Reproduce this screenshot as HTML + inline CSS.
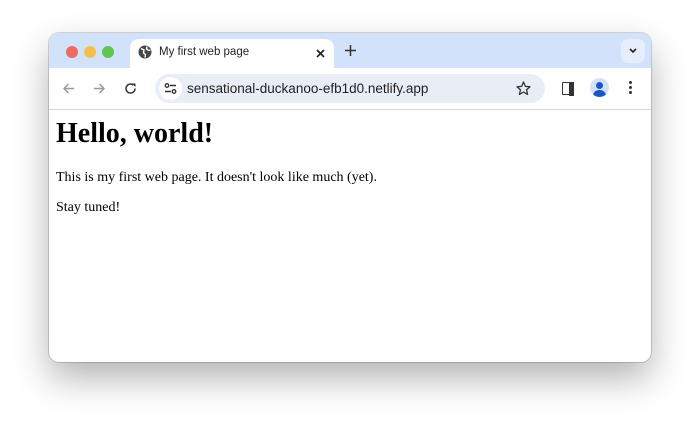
<!DOCTYPE html>
<html><head><style>
body{margin:0;width:700px;height:428px;background:#fff;position:relative;overflow:hidden;font-family:"Liberation Sans",sans-serif}
.win{position:absolute;left:49px;top:33px;width:602px;height:329px;border-radius:10px;background:#fff;box-shadow:0 16px 36px rgba(0,0,0,.3),0 0 0 1px rgba(0,0,0,.15);overflow:hidden}
.strip{position:absolute;left:0;top:0;width:602px;height:35px;background:#d3e2fb}
.dot{position:absolute;top:13px;width:12px;height:12px;border-radius:50%}
.tab{position:absolute;left:81px;top:6px;width:204px;height:29px;background:#fff;border-radius:9px 9px 0 0}
.tab span{position:absolute;left:29px;top:7px;font-size:11.5px;color:#1f1f1f}
.bar{position:absolute;left:0;top:35px;width:602px;height:41px;background:#fff;border-bottom:1px solid #d8d8d8}
.omni{position:absolute;left:106px;top:6px;width:390px;height:29px;border-radius:15px;background:#e9eef6}
.omni span{position:absolute;left:32px;top:7px;font-size:13.5px;color:#1f1f1f}
.content{position:absolute;left:0;top:77px;font-family:"Liberation Serif",serif;color:#000}
h1{position:absolute;left:7px;top:8px;margin:0;font-size:28px;white-space:nowrap}
p{position:absolute;left:7px;margin:0;font-size:14px;white-space:nowrap}
</style></head><body>
<div class="win">
<div class="strip">
<div class="dot" style="left:17px;background:#ec6a5f"></div>
<div class="dot" style="left:35px;background:#f4bf4f"></div>
<div class="dot" style="left:53px;background:#61c554"></div>
<div class="tab">
<svg style="position:absolute;left:8px;top:6px" width="14" height="14" viewBox="0 0 14 14"><circle cx="7" cy="7" r="6.5" fill="#474747"/><path d="M3 3.5 L6 5 L5.5 8 L7.5 9.5 L7 12.5 M9 1.5 L8.5 4 L11 5.5 L12.5 5" stroke="#fff" stroke-width="1.4" fill="none"/></svg>
<span>My first web page</span>
<svg style="position:absolute;left:186px;top:10px" width="9" height="9" viewBox="0 0 9 9"><path d="M1 1L8 8M8 1L1 8" stroke="#1f1f1f" stroke-width="1.6"/></svg>
</div>
<svg style="position:absolute;left:296px;top:12px" width="11" height="11" viewBox="0 0 11 11"><path d="M5.5 0V11M0 5.5H11" stroke="#333" stroke-width="1.5"/></svg>
<div style="position:absolute;left:572px;top:6px;width:24px;height:24px;border-radius:7px;background:#e6edfb"></div>
<svg style="position:absolute;left:580px;top:15px" width="8" height="6" viewBox="0 0 8 6"><path d="M1 1L4 4L7 1" stroke="#222" stroke-width="1.6" fill="none"/></svg>
</div>
<div class="bar">
<svg style="position:absolute;left:13px;top:14px" width="13" height="13" viewBox="0 0 13 13"><path d="M12 6.5H2M6.5 2L2 6.5L6.5 11" stroke="#9a9a9a" stroke-width="1.5" fill="none"/></svg>
<svg style="position:absolute;left:44px;top:14px" width="13" height="13" viewBox="0 0 13 13"><path d="M1 6.5H11M6.5 2L11 6.5L6.5 11" stroke="#9a9a9a" stroke-width="1.5" fill="none"/></svg>
<svg style="position:absolute;left:75px;top:14px" width="13" height="13" viewBox="0 0 13 13"><path d="M11 6.5A4.5 4.5 0 1 1 9.5 3.2" stroke="#333" stroke-width="1.5" fill="none"/><path d="M8 1.5H11.5V5Z" fill="#333"/></svg>
<div class="omni">
<div style="position:absolute;left:4px;top:3px;width:23px;height:23px;border-radius:50%;background:#fff"></div>
<svg style="position:absolute;left:9px;top:9px" width="13" height="11" viewBox="0 0 13 11"><circle cx="3" cy="2.5" r="1.8" stroke="#333" stroke-width="1.3" fill="none"/><path d="M6 2.5H12M1 8.5H7" stroke="#333" stroke-width="1.4"/><circle cx="10" cy="8.5" r="1.8" stroke="#333" stroke-width="1.3" fill="none"/></svg>
<span>sensational-duckanoo-efb1d0.netlify.app</span>
<svg style="position:absolute;left:361px;top:7px" width="15" height="15" viewBox="0 0 15 15"><path d="M7.5 1L9.4 5.4L14 5.8L10.5 8.8L11.6 13.4L7.5 11L3.4 13.4L4.5 8.8L1 5.8L5.6 5.4Z" stroke="#333" stroke-width="1.3" fill="none" stroke-linejoin="round"/></svg>
</div>
<div style="position:absolute;left:513px;top:14px;width:10px;height:11px;border:1.5px solid #333;border-radius:1px"></div>
<div style="position:absolute;left:520px;top:14px;width:5px;height:14px;background:#333"></div>
<div style="position:absolute;left:541px;top:10px;width:19px;height:19px;border-radius:50%;background:#d3e2fb;overflow:hidden">
<div style="position:absolute;left:6px;top:4px;width:7px;height:7px;border-radius:50%;background:#1b56c9"></div>
<div style="position:absolute;left:3px;top:12px;width:13px;height:8px;border-radius:6px 6px 0 0;background:#1b56c9"></div></div>
<div style="position:absolute;left:580px;top:13px;width:3px;height:3px;border-radius:50%;background:#333;box-shadow:0 5px 0 #333,0 10px 0 #333"></div>
</div>
<div class="content">
<h1>Hello, world!</h1>
<p style="top:60px">This is my first web page. It doesn't look like much (yet).</p>
<p style="top:90px">Stay tuned!</p>
</div>
</div>
</body></html>
